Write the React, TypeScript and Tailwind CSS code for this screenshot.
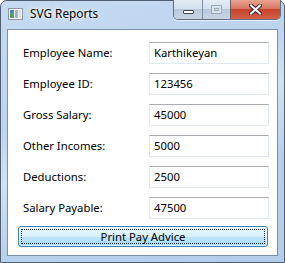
const fields = [
  { label: 'Employee Name:', value: 'Karthikeyan' },
  { label: 'Employee ID:', value: '123456' },
  { label: 'Gross Salary:', value: '45000' },
  { label: 'Other Incomes:', value: '5000' },
  { label: 'Deductions:', value: '2500' },
  { label: 'Salary Payable:', value: '47500' },
];

function AppIcon() {
  return (
    <svg width="15" height="12" viewBox="0 0 15 12" className="block">
      <rect x="0.5" y="0.5" width="14" height="11" fill="#f4f6f8" stroke="#8c98a6" />
      <rect x="2" y="2" width="4" height="8" fill="#5b9a6e" />
      <rect x="2" y="2" width="4" height="3" fill="#4a86b8" />
      <rect x="7" y="2" width="3" height="8" fill="#9fb3c4" />
      <rect x="11" y="2" width="2" height="8" fill="#d7dee6" />
    </svg>
  );
}

function CaptionButtons() {
  return (
    <div className="absolute right-[3px] top-[-1px] flex h-[20px] overflow-hidden rounded-b-[5px] border border-t-0 border-[#5f6f84] shadow-[0_1px_0_rgba(255,255,255,0.6)]">
      <div className="flex w-[29px] items-center justify-center border-r border-[#7d8da1] bg-[linear-gradient(to_bottom,#e4ecf6_0%,#d3e0ef_45%,#b9c9dc_50%,#c6d5e6_100%)]">
        <div className="mt-[4px] h-[4px] w-[11px] rounded-[1px] border border-[#3a4756] bg-white" />
      </div>
      <div className="flex w-[28px] items-center justify-center border-r border-[#6a5a5a] bg-[linear-gradient(to_bottom,#e4ecf6_0%,#d3e0ef_45%,#b9c9dc_50%,#c6d5e6_100%)]">
        <div className="flex h-[9px] w-[11px] items-center justify-center border border-[#9eacbc] bg-[#d8e2ee]">
          <div className="h-[3px] w-[5px] border border-[#9eacbc]" />
        </div>
      </div>
      <div className="flex w-[49px] items-center justify-center bg-[linear-gradient(to_bottom,#e8a391_0%,#d8765f_45%,#c7432b_50%,#d2624a_100%)]">
        <svg width="13" height="11" viewBox="0 0 13 11">
          <path d="M2 1.5 L11 9.5 M11 1.5 L2 9.5" stroke="#3b2a28" strokeWidth="4" strokeLinecap="square" />
          <path d="M2 1.5 L11 9.5 M11 1.5 L2 9.5" stroke="#ffffff" strokeWidth="2" strokeLinecap="square" />
        </svg>
      </div>
    </div>
  );
}

export default function App() {
  return (
    <div className="h-[263px] w-[285px] bg-white font-['Noto_Sans','Liberation_Sans',sans-serif] text-[11.3px] text-black">
      <div className="relative flex h-full w-full flex-col rounded-t-[7px] border border-[#4f5e71] bg-[linear-gradient(160deg,#c6dbf1_0%,#bcd4ee_35%,#d0e2f5_50%,#b8d1eb_70%,#b3cde9_100%)] px-[6px] pb-[6px]">
        <div className="flex h-[28px] items-center gap-[7px] pl-[1px] pb-[2px]">
          <AppIcon />
          <span className="text-[11.8px] leading-none [text-shadow:0_0_6px_#ffffff,0_0_3px_#ffffff]">SVG Reports</span>
        </div>
        <CaptionButtons />

        <div className="flex flex-1 flex-col border border-[#7e90a7] bg-white pl-[15px] pr-[8px] pt-[12px]">
          <div className="flex flex-col gap-[9px]">
            {fields.map((f) => (
              <div key={f.label} className="flex h-[22px] items-center">
                <span className="flex-1 leading-none">{f.label}</span>
                <div className="flex h-[22px] w-[120px] items-center border border-[#e2e8ef] border-t-[#abadb3] pl-[4px]">
                  {f.value}
                </div>
              </div>
            ))}
          </div>

          <button className="relative ml-[-5px] mt-[7px] h-[21px] w-[250px] rounded-[3px] border border-[#3c7fb1] bg-[linear-gradient(to_bottom,#eaf6fd_0%,#d9f0fc_50%,#bee6fd_50%,#a7d9f5_100%)] leading-none shadow-[inset_0_0_0_1px_rgba(255,255,255,0.6)]">
            <span className="pointer-events-none absolute inset-[2px] border border-dotted border-[#1c2b3a]" />
            Print Pay Advice
          </button>
        </div>
      </div>
    </div>
  );
}
